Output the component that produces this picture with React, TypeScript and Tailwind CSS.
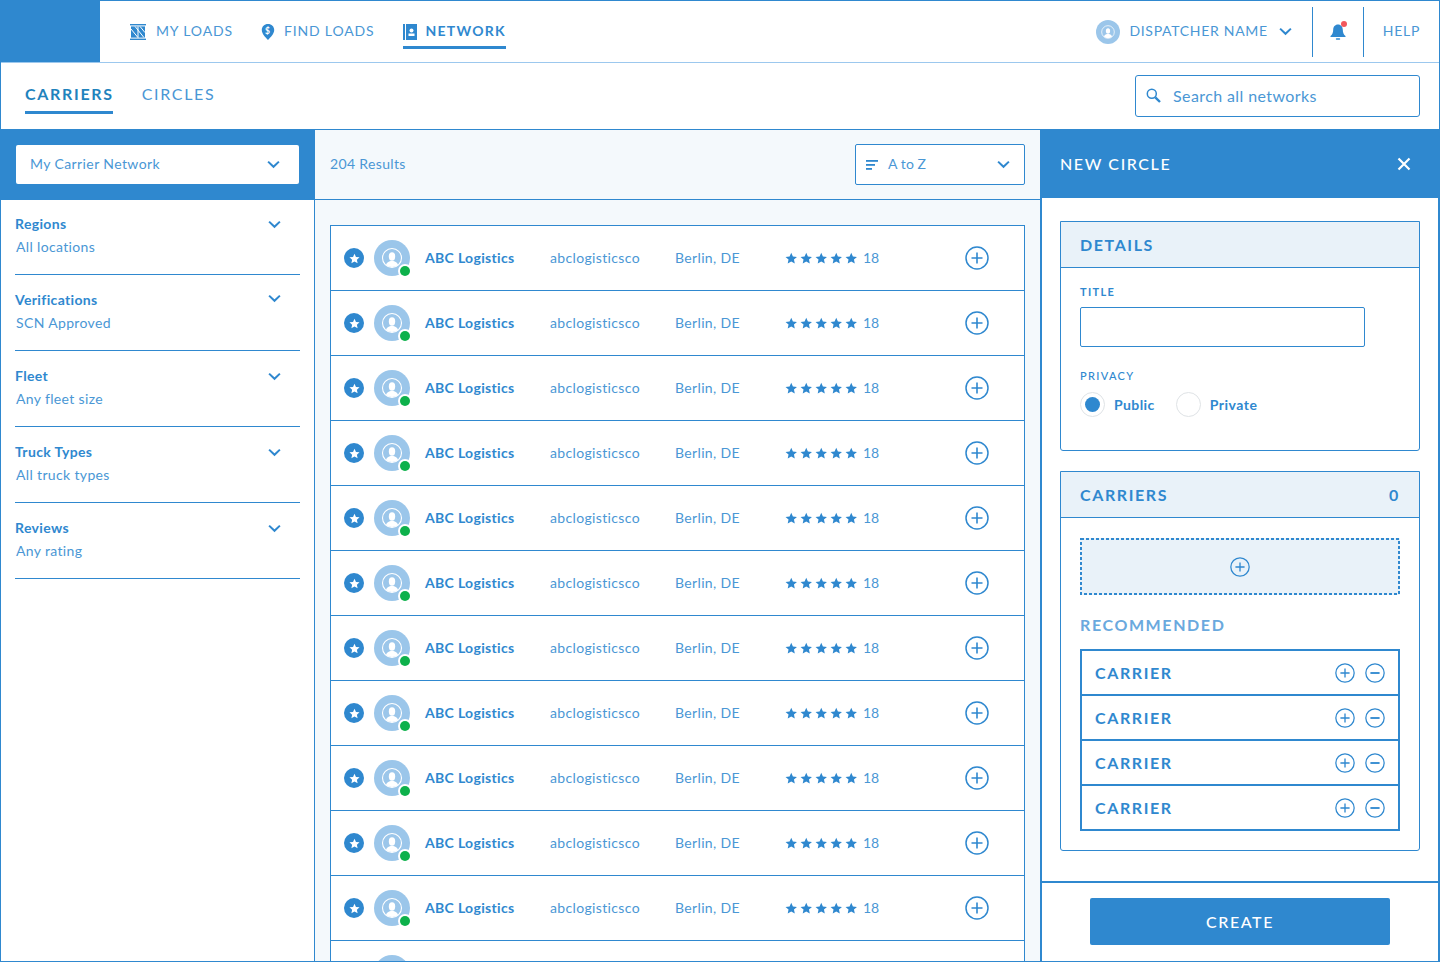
const blue = '#2f88cf';

function Chevron({ className = '' }: { className?: string }) {
  return (
    <svg viewBox="0 0 14 9" className={`w-[13px] h-[9px] ${className}`} fill="none" stroke={blue} strokeWidth="2.2">
      <path d="M1.2 1.4 7 7l5.8-5.6" />
    </svg>
  );
}

function RoundIcon({ minus = false, size = 24 }: { minus?: boolean; size?: number }) {
  return (
    <svg viewBox="0 0 24 24" width={size} height={size} fill="none" stroke={blue}>
      <circle cx="12" cy="12" r="11" strokeWidth="1.5" />
      <path d={minus ? 'M6.5 12h11' : 'M12 6.5v11M6.5 12h11'} strokeWidth={minus ? 2.2 : 1.6} />
    </svg>
  );
}

function StarShape({ size, color }: { size: number; color: string }) {
  return (
    <svg viewBox="0 0 24 24" width={size} height={size} fill={color}>
      <polygon points="12,1.5 15.2,8.6 23,9.4 17.2,14.6 18.8,22.2 12,18.3 5.2,22.2 6.8,14.6 1,9.4 8.8,8.6" />
    </svg>
  );
}

function Person({ size }: { size: number }) {
  return (
    <svg viewBox="0 0 36 36" width={size} height={size}>
      <circle cx="18" cy="18" r="18" fill="#9bc6ea" />
      <circle cx="18" cy="18" r="9.5" fill="none" stroke="#fff" strokeWidth="1.1" />
      <ellipse cx="18" cy="16.5" rx="3.2" ry="4.2" fill="#fff" />
      <path d="M12 25c.6-2.7 2.8-3.5 4.6-4h2.8c1.8.5 4 1.3 4.6 4-1.6 1.3-3.7 2-6 2s-4.4-.7-6-2z" fill="#fff" />
    </svg>
  );
}

function MyLoadsIcon() {
  return (
    <svg viewBox="0 0 16 16" className="w-4 h-4" fill="none">
      <rect x="0" y="0" width="16" height="1.4" fill={blue} />
      <rect x="0" y="14.6" width="16" height="1.4" fill={blue} />
      <rect x="1" y="2.4" width="14" height="11.2" fill={blue} />
      <path d="M1 5l7 8.6M5 2.4l9 11.2M10 2.4l5 6.2M8 2.4v11.2" stroke="#fff" strokeWidth="1" />
    </svg>
  );
}

function PinIcon() {
  return (
    <svg viewBox="0 0 14 16" className="w-[14px] h-4">
      <path d="M7 0C3.4 0 .8 2.6.8 6c0 3.8 3.7 7.4 6.2 10 2.5-2.6 6.2-6.2 6.2-10C13.2 2.6 10.6 0 7 0z" fill={blue} />
      <text x="7" y="9.5" textAnchor="middle" fontSize="8.5" fontWeight="700" fill="#fff" fontFamily="Lato">$</text>
    </svg>
  );
}

function BookIcon() {
  return (
    <svg viewBox="0 0 14 16" className="w-[14px] h-4">
      <rect x="0" y="0" width="2" height="16" fill={blue} />
      <rect x="3" y="0" width="11" height="16" fill={blue} />
      <circle cx="8.5" cy="6.5" r="2" fill="#fff" />
      <rect x="5.5" y="9.5" width="6" height="2.5" fill="#fff" />
    </svg>
  );
}

function BellIcon() {
  return (
    <svg viewBox="0 0 18 18" className="w-[18px] h-[18px]">
      <path d="M9 1.5c-3 0-4.8 2.3-4.8 5.2 0 3.2-1 4.8-2.7 6.3v1h15v-1c-1.7-1.5-2.7-3.1-2.7-6.3 0-2.9-1.8-5.2-4.8-5.2z" fill={blue} />
      <rect x="6.8" y="15.3" width="4.4" height="1.5" rx=".7" fill={blue} />
    </svg>
  );
}

function SearchIcon() {
  return (
    <svg viewBox="0 0 15 15" className="w-[15px] h-[15px]" fill="none" stroke={blue}>
      <circle cx="5.8" cy="5.8" r="4.5" strokeWidth="1.5" />
      <path d="M9.3 9.3 14 14" strokeWidth="2.4" />
    </svg>
  );
}

const filters = [
  { title: 'Regions', value: 'All locations', h: 'h-[75px]', pt: 'pt-[15px]', chev: '' },
  { title: 'Verifications', value: 'SCN Approved', h: 'h-[76px]', pt: 'pt-[16px]', chev: 'mb-[4px]' },
  { title: 'Fleet', value: 'Any fleet size', h: 'h-[76px]', pt: 'pt-[16px]', chev: '' },
  { title: 'Truck Types', value: 'All truck types', h: 'h-[76px]', pt: 'pt-[16px]', chev: '' },
  { title: 'Reviews', value: 'Any rating', h: 'h-[76px]', pt: 'pt-[16px]', chev: '' },
];

function FilterRow({ title, value, h, pt, chev }: { title: string; value: string; h: string; pt: string; chev: string }) {
  return (
    <div className={`${h} ${pt} border-b border-[#2f88cf]`}>
      <div className="flex items-center justify-between pr-[19px]">
        <span className="text-[14px] leading-[18px] font-bold tracking-[0.35px]">{title}</span>
        <Chevron className={chev} />
      </div>
      <div className="text-[14px] leading-[18px] mt-[5px] pl-px tracking-[0.35px] text-[#4a97d5]">{value}</div>
    </div>
  );
}

function CarrierRow() {
  return (
    <div className="h-[65px] shrink-0 flex items-center pl-[13px] border-b border-[#2f88cf]">
      <div className="w-[20px] h-[20px] rounded-full bg-[#2f88cf] flex items-center justify-center">
        <StarShape size={11} color="#fff" />
      </div>
      <div className="relative ml-[10px] w-[36px] h-[36px]">
        <Person size={36} />
        <div className="absolute right-[-2px] bottom-[-2px] w-[14px] h-[14px] rounded-full bg-white flex items-center justify-center">
          <div className="w-[10px] h-[10px] rounded-full bg-[#0db14b]" />
        </div>
      </div>
      <span className="ml-[15px] mb-[2px] w-[125px] text-[14px] font-bold tracking-[0.32px]">ABC Logistics</span>
      <span className="w-[125px] mb-[2px] text-[14px] tracking-[0.35px] text-[#4a97d5]">abclogisticsco</span>
      <span className="w-[110px] mb-[2px] text-[14px] tracking-[0.35px] text-[#4a97d5]">Berlin, DE</span>
      <span className="flex items-center gap-[2.5px]">
        {[0, 1, 2, 3, 4].map((i) => (
          <StarShape key={i} size={12.5} color={blue} />
        ))}
      </span>
      <span className="ml-[5.5px] mb-[2px] text-[14px] text-[#4a97d5]">18</span>
      <div className="ml-auto mr-[35px] flex">
        <RoundIcon />
      </div>
    </div>
  );
}

function RecRow({ last }: { last?: boolean }) {
  return (
    <div className={`flex items-center justify-between px-[13px] ${last ? 'h-[43px]' : 'h-[45px] border-b-2 border-[#2f88cf]'}`}>
      <span className="text-[16px] font-bold tracking-[0.1em]">CARRIER</span>
      <div className="flex gap-[10px]">
        <RoundIcon size={20} />
        <RoundIcon size={20} minus />
      </div>
    </div>
  );
}

export default function App() {
  return (
    <div className="w-[1440px] h-[962px] overflow-hidden flex flex-col bg-white text-[#2f88cf] font-['Lato',sans-serif] border border-[#2f88cf]">
      {/* Top nav */}
      <header className="h-[62px] shrink-0 flex items-stretch border-b border-[#9cc8ee]">
        <div className="w-[100px] bg-[#2f88cf] -ml-px" />
        <nav className="flex items-center ml-[30px] text-[14px] tracking-[0.06em] text-[#4a97d5]">
          <div className="flex items-center gap-[10px]">
            <MyLoadsIcon />
            <span className="mb-[2px]">MY LOADS</span>
          </div>
          <div className="flex items-center gap-[9px] ml-[28px]">
            <PinIcon />
            <span className="mb-[2px]">FIND LOADS</span>
          </div>
          <div className="relative flex items-center gap-[8px] ml-[29px] font-bold text-[#2f88cf] tracking-[0.09em]">
            <BookIcon />
            <span className="mb-[2px]">NETWORK</span>
            <div className="absolute left-0 right-0 top-[26px] h-[3px] bg-[#2f88cf]" />
          </div>
        </nav>
        <div className="ml-auto flex items-center text-[14px] tracking-[0.05em] text-[#4a97d5]">
          <Person size={24} />
          <span className="ml-[9px] mb-[2px]">DISPATCHER NAME</span>
          <Chevron className="ml-[11px]" />
          <div className="w-px h-[50px] bg-[#2f88cf] ml-[20px]" />
          <div className="relative w-[50px] flex justify-center">
            <BellIcon />
            <div className="absolute right-[16px] top-[-2px] w-[6px] h-[6px] rounded-full bg-[#f2575c]" />
          </div>
          <div className="w-px h-[50px] bg-[#2f88cf]" />
          <span className="ml-[19px] mr-[19px] mb-[2px]">HELP</span>
        </div>
      </header>

      {/* Sub nav */}
      <div className="h-[66px] shrink-0 flex items-center pl-[24px] pr-[19px]">
        <div className="relative -mt-[5px] font-bold text-[16px] tracking-[0.105em] text-[#1f83bd]">
          CARRIERS
          <div className="absolute left-0 right-[1px] top-[29px] h-[3px] bg-[#2f88cf]" />
        </div>
        <div className="ml-[28px] -mt-[5px] text-[16px] tracking-[0.105em] text-[#4a97d5]">CIRCLES</div>
        <div className="ml-auto -mt-[1px] w-[285px] h-[42px] rounded-[3px] border border-[#2f88cf] flex items-center pl-[10px]">
          <SearchIcon />
          <span className="ml-[12px] text-[16px] tracking-[0.4px] text-[#4a97d5]">Search all networks</span>
        </div>
      </div>

      {/* Body */}
      <div className="flex flex-1 min-h-0">
        {/* Left filters */}
        <aside className="w-[314px] shrink-0 flex flex-col border-r border-[#2f88cf]">
          <div className="h-[71px] shrink-0 bg-[#2f88cf] -ml-px flex items-center px-[16px]">
            <div className="w-[283px] h-[39px] shrink-0 bg-white rounded-[2px] flex items-center justify-between pl-[14px] pr-[19px]">
              <span className="mb-[2px] text-[14px] tracking-[0.4px] text-[#4a97d5]">My Carrier Network</span>
              <Chevron />
            </div>
          </div>
          <div className="px-[14px]">
            {filters.map((f) => (
              <FilterRow key={f.title} {...f} />
            ))}
          </div>
        </aside>

        {/* Results */}
        <main className="w-[725px] shrink-0 flex flex-col bg-[#f4f9fc] min-h-0">
          <div className="h-[71px] shrink-0 border-t border-b border-[#2f88cf] flex items-center px-[15px] justify-between">
            <span className="mb-[2px] text-[14px] tracking-[0.35px] text-[#4a97d5]">204 Results</span>
            <div className="w-[170px] h-[41px] border border-[#2f88cf] rounded-[2px] bg-white flex items-center pl-[10px] pr-[14px]">
              <svg viewBox="0 0 12 10" className="w-[12px] h-[10px]" fill={blue}>
                <rect width="12" height="1.8" />
                <rect y="4" width="9" height="1.8" />
                <rect y="8" width="6" height="1.8" />
              </svg>
              <span className="ml-[10px] mb-[2px] text-[14px] tracking-[0.1px] text-[#4a97d5]">A to Z</span>
              <Chevron className="ml-auto" />
            </div>
          </div>
          <div className="mt-[25px] mx-[15px] bg-white border border-[#2f88cf] border-b-0 flex flex-col flex-1 min-h-0 overflow-hidden">
            {Array.from({ length: 11 }).map((_, i) => (
              <CarrierRow key={i} />
            ))}
            <div className="h-[40px] shrink-0 flex pl-[43px] pt-[14px]">
              <Person size={36} />
            </div>
          </div>
        </main>

        {/* New circle panel */}
        <section className="flex-1 flex flex-col border-l-2 border-r-2 border-[#2f88cf] min-w-0 -mr-px">
          <div className="h-[69px] shrink-0 -mx-[2px] bg-[#2f88cf] flex items-center justify-between pl-[20px] pr-[29px] text-white">
            <span className="text-[16px] font-medium tracking-[0.1em]">NEW CIRCLE</span>
            <svg viewBox="0 0 14 14" className="w-[14px] h-[14px]" fill="none" stroke="#fff" strokeWidth="2.2">
              <path d="M1.5 1.5l11 11M12.5 1.5l-11 11" />
            </svg>
          </div>
          <div className="flex-1 px-[18px] pt-[23px]">
            <div className="h-[230px] border border-[#2f88cf] rounded-b-[3px]">
              <div className="h-[46px] border-b border-[#2f88cf] bg-[#e9f2f9] flex items-center pl-[19px] text-[16px] font-bold tracking-[0.1em]">
                DETAILS
              </div>
              <div className="pl-[19px] pt-[17px]">
                <div className="text-[11px] leading-[14px] font-bold tracking-[0.12em]">TITLE</div>
                <div className="mt-[8px] w-[285px] h-[40px] rounded-[2px] border border-[#2f88cf]" />
                <div className="mt-[22px] text-[11px] leading-[14px] tracking-[0.12em] font-medium">PRIVACY</div>
                <div className="mt-[9px] flex items-center">
                  <div className="w-[25px] h-[25px] rounded-full border border-[#dfe3e6] flex items-center justify-center">
                    <div className="w-[15px] h-[15px] rounded-full bg-[#2f88cf]" />
                  </div>
                  <span className="ml-[9px] text-[14px] font-bold tracking-[0.4px]">Public</span>
                  <div className="ml-[21px] w-[25px] h-[25px] rounded-full border border-[#dfe3e6]" />
                  <span className="ml-[9px] text-[14px] font-bold tracking-[0.5px]">Private</span>
                </div>
              </div>
            </div>
            <div className="mt-[20px] h-[380px] border border-[#2f88cf] rounded-b-[3px]">
              <div className="h-[46px] border-b border-[#2f88cf] bg-[#e9f2f9] flex items-center justify-between px-[19px] text-[16px] font-bold tracking-[0.1em]">
                <span>CARRIERS</span>
                <span>0</span>
              </div>
              <div className="px-[19px] pt-[20px]">
                <div className="relative h-[57px] bg-[#e9f2f9] flex items-center justify-center">
                  <svg viewBox="0 0 320 57" className="absolute inset-0 w-full h-full" fill="none">
                    <rect x="1" y="1" width="318" height="55" stroke={blue} strokeWidth="2" strokeDasharray="3 2" />
                  </svg>
                  <RoundIcon size={20} />
                </div>
                <div className="mt-[20px] text-[16px] leading-[20px] font-bold tracking-[0.1em] text-[#6aa9de]">RECOMMENDED</div>
                <div className="mt-[14px] border-2 border-[#2f88cf]">
                  <RecRow />
                  <RecRow />
                  <RecRow />
                  <RecRow last />
                </div>
              </div>
            </div>
          </div>
          <div className="h-[80px] shrink-0 border-t-2 border-[#2f88cf] flex justify-center pt-[15px]">
            <div className="w-[300px] h-[47px] rounded-[2px] bg-[#2f88cf] flex items-center justify-center text-white text-[16px] font-medium tracking-[0.1em]">
              CREATE
            </div>
          </div>
        </section>
      </div>
    </div>
  );
}
